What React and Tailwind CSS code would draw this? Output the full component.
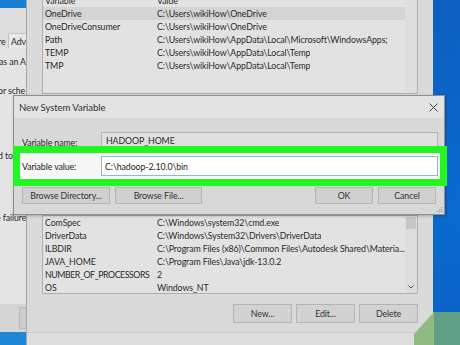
import React from "react";

const font = { fontFamily: 'Lato, "Noto Sans", sans-serif' };

const userVars = [
  ["OneDrive", "C:\\Users\\wikiHow\\OneDrive"],
  ["OneDriveConsumer", "C:\\Users\\wikiHow\\OneDrive"],
  ["Path", "C:\\Users\\wikiHow\\AppData\\Local\\Microsoft\\WindowsApps;"],
  ["TEMP", "C:\\Users\\wikiHow\\AppData\\Local\\Temp"],
  ["TMP", "C:\\Users\\wikiHow\\AppData\\Local\\Temp"],
];

const sysVars = [
  ["ComSpec", "C:\\Windows\\system32\\cmd.exe"],
  ["DriverData", "C:\\Windows\\System32\\Drivers\\DriverData"],
  ["ILBDIR", "C:\\Program Files (x86)\\Common Files\\Autodesk Shared\\Materia..."],
  ["JAVA_HOME", "C:\\Program Files\\Java\\jdk-13.0.2"],
  ["NUMBER_OF_PROCESSORS", "2"],
  ["OS", "Windows_NT"],
];

function Row({ name, value, selected }) {
  const tight = name.length > 16 && name === name.toUpperCase();
  return (
    <div className={"flex h-[13px] shrink-0 items-center leading-[13px] " + (selected ? "bg-[#d4d4d4]" : "")}>
      <div className={"w-[114px] shrink-0 pl-[2px] whitespace-nowrap " + (tight ? "tracking-[-0.45px]" : "")}>{name}</div>
      <div className="whitespace-nowrap overflow-hidden">{value}</div>
    </div>
  );
}

function Btn({ children, w }) {
  return (
    <div
      className={
        "h-[19px] flex items-center justify-center border border-[#b5b5b5] bg-[#d2d2d2] text-[#333] " + w
      }
    >
      {children}
    </div>
  );
}

function DlgBtn({ children, w }) {
  return (
    <div
      className={
        "h-[17px] flex items-center justify-center border border-[#b5b5b5] bg-[#d0d0d0] text-[#333] " + w
      }
    >
      {children}
    </div>
  );
}

export default function App() {
  return (
    <div
      className="relative w-[460px] h-[345px] overflow-hidden bg-[#dadada] text-[8.8px] tracking-[-0.1px] leading-[13px] text-[#2a2a2a]"
      style={font}
    >
      <div className="flex h-full">
        {/* System Properties window (left edge) */}
        <div className="w-[26px] shrink-0 flex flex-col bg-[#e4e4e4] overflow-hidden">
          <div className="h-[8px] bg-[#1b7fd1]" />
          <div className="h-[26px] bg-[#dedede]" />
          <div className="flex h-[14px] items-end whitespace-nowrap bg-[#dedede]">
            <span className="ml-[-2px] w-[15px]">re</span>
            <span className="h-[15px] bg-[#e8e8e8] border-l border-t border-[#c4c4c4] pl-[2px] pt-[1px]">Adv</span>
          </div>
          <div className="mt-[7px] whitespace-nowrap ml-[-1px]">as an A</div>
          <div className="mt-[16px] whitespace-nowrap ml-[-2px]">or sche</div>
          <div className="mt-[52px] whitespace-nowrap ml-[-2px]">d to</div>
          <div className="mt-[49px] whitespace-nowrap ml-[-4px]">e failure</div>
          <div className="mt-auto h-[28px] bg-[#d4d4d4] flex justify-end">
            <div className="mt-[3px] w-[7px] h-[22px] border border-[#b8b8b8] border-r-0 bg-[#cccccc]" />
          </div>
          <div className="h-[13px] bg-[#1e86d6]" />
        </div>

        {/* Environment Variables window */}
        <div className="w-[407px] shrink-0 flex flex-col border-l border-[#a8a8a8] bg-[#dadada]">
          {/* user variables list */}
          <div className="ml-[15px] mr-[15px] mt-[-8px] h-[102px] shrink-0 border border-[#afafaf] bg-[#e2e2e2] flex">
            <div className="flex-1 min-w-0">
              <div className="flex h-[14px] items-center">
                <div className="w-[114px] shrink-0 pl-[2px]">Variable</div>
                <div>Value</div>
              </div>
              {userVars.map(([n, v], i) => (
                <Row key={n} name={n} value={v} selected={i === 0} />
              ))}
            </div>
            <div className="w-[12px] bg-[#dedede]" />
          </div>

          <div className="h-[121px] shrink-0" />

          {/* system variables list */}
          <div className="ml-[15px] mr-[15px] h-[79px] shrink-0 overflow-hidden border border-[#afafaf] bg-[#e2e2e2] flex">
            <div className="flex-1 min-w-0 flex flex-col">
              {sysVars.map(([n, v]) => (
                <Row key={n} name={n} value={v} />
              ))}
            </div>
            <div className="w-[12px] bg-[#dcdcdc] flex flex-col items-center">
              <div className="mt-[1px] w-[10px] h-[12px] bg-[#c6c6c6]" />
              <svg className="mt-auto mb-[4px]" width="6" height="4" viewBox="0 0 6 4">
                <path d="M0.5 0.5 L3 3 L5.5 0.5" stroke="#555" strokeWidth="1" fill="none" />
              </svg>
            </div>
          </div>

          <div className="flex justify-end gap-[4px] mr-[15px] mt-[10px]">
            <Btn w="w-[59px]">New...</Btn>
            <Btn w="w-[59px]">Edit...</Btn>
            <Btn w="w-[59px]">Delete</Btn>
          </div>
          <div className="mt-auto h-[13px] border-t border-[#cdcdcd] bg-[#dddddd]" />
        </div>

        {/* desktop */}
        <div className="flex-1 flex flex-col bg-[linear-gradient(180deg,#0d5fc0_0%,#0a6ad0_60%,#0b62c6_100%)]">
          <div className="mt-auto h-[33px] bg-[#5f9f86]" />
        </div>
      </div>

      {/* light green wedge in bottom-right */}
      <svg className="absolute left-[414px] top-[312px]" width="20" height="33" viewBox="0 0 20 33">
        <polygon points="20,0 20,33 0,33 0,22" fill="#8dbb82" />
      </svg>

      {/* New System Variable dialog */}
      <div className="absolute left-[13px] top-[95px] w-[432px] h-[120px] border border-[#8f8f8f] bg-[#d8d8d8] flex flex-col shadow-[1px_1px_3px_rgba(0,0,0,0.25)]">
        <div className="h-[22px] shrink-0 flex items-center justify-between bg-[#e3e3e3] pl-[5px] pr-[6px]">
          <span className="text-[9.6px] text-[#333]">New System Variable</span>
          <svg width="9" height="9" viewBox="0 0 9 9">
            <path d="M0.5 0.5 L8.5 8.5 M8.5 0.5 L0.5 8.5" stroke="#444" strokeWidth="1" />
          </svg>
        </div>
        <div className="flex h-[14px] mt-[14px] shrink-0">
          <div className="w-[87px] pl-[8px] pt-[4px]">Variable name:</div>
          <div className="w-[337px] h-[17px] border border-[#b5b5b5] border-b-0 bg-[#e0e0e0] pl-[4px] pt-[1px] whitespace-nowrap">
            HADOOP_HOME
          </div>
        </div>
        <div className="ml-[-1px] mr-[-3px] h-[40px] shrink-0 border-[7px] border-[#22f522] bg-[#f7f7f7] flex items-center">
          <div className="w-[81px] pl-[2px] text-[#222]">Variable value:</div>
          <div className="w-[337px] h-[20px] border border-[#8fb6dd] bg-white flex items-center pl-[3px] text-[#222] whitespace-nowrap">
            C:\hadoop-2.10.0\bin
          </div>
        </div>
        <div className="flex mt-[1px] pl-[8px] pr-[8px] gap-[5px]">
          <DlgBtn w="w-[88px]">Browse Directory...</DlgBtn>
          <DlgBtn w="w-[87px]">Browse File...</DlgBtn>
          <div className="flex-1" />
          <DlgBtn w="w-[58px]">OK</DlgBtn>
          <DlgBtn w="w-[58px]">Cancel</DlgBtn>
        </div>
        <svg className="absolute right-[1px] bottom-[1px]" width="6" height="6" viewBox="0 0 6 6">
          <rect x="4" y="0" width="1.2" height="1.2" fill="#999" />
          <rect x="2" y="2" width="1.2" height="1.2" fill="#999" />
          <rect x="4" y="2" width="1.2" height="1.2" fill="#999" />
          <rect x="0" y="4" width="1.2" height="1.2" fill="#999" />
          <rect x="2" y="4" width="1.2" height="1.2" fill="#999" />
          <rect x="4" y="4" width="1.2" height="1.2" fill="#999" />
        </svg>
      </div>
    </div>
  );
}
